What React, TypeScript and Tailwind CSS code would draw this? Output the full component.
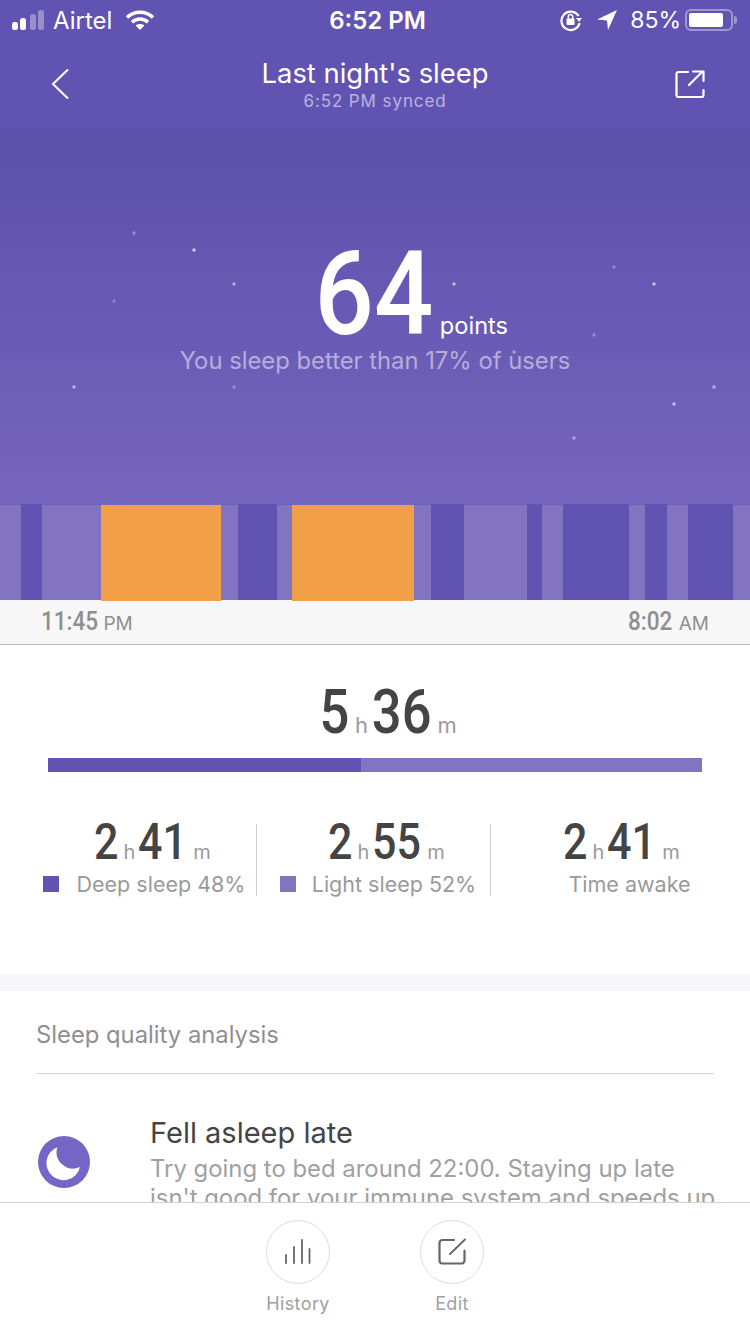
const segs: [number, string][] = [
  [21, "l"], [21, "d"], [59, "l"], [120, "o"], [17, "l"], [39, "d"], [15, "l"], [122, "o"], [17, "l"], [33, "d"],
  [63, "l"], [15, "d"], [21, "l"], [66, "d"], [16, "l"], [22, "d"], [21, "l"], [45, "d"], [17, "l"],
];

const stars: [number, number, number][] = [
  [134, 233, 0.35], [194, 250, 0.7], [234, 284, 0.55], [114, 301, 0.25], [454, 284, 0.6], [614, 267, 0.3],
  [654, 284, 0.65], [594, 335, 0.3], [514, 352, 0.4], [74, 387, 0.55], [234, 387, 0.3], [674, 404, 0.6],
  [714, 387, 0.5], [574, 438, 0.45],
];

function Duration({ h, m, big }: { h: string; m: string; big?: boolean }) {
  const num = big ? "text-[61px] leading-[58px]" : "text-[50px] leading-[50px]";
  const unit = big ? "text-[22px]" : "text-[20px]";
  return (
    <div className="flex items-baseline justify-center text-[#444444]">
      <span className={`${num} font-medium [font-family:Roboto,sans-serif] inline-block scale-x-[0.86]`}>{h}</span>
      <span className={`${unit} text-[#9a9a9a] ml-[3px]`}>h</span>
      <span className={`${num} font-medium [font-family:Roboto,sans-serif] inline-block scale-x-[0.86] -ml-[1px]`}>{m}</span>
      <span className={`${unit} text-[#9a9a9a] ${big ? "ml-[1px]" : "ml-[2px]"}`}>m</span>
    </div>
  );
}

export default function App() {
  return (
    <div className="w-[750px] h-[1334px] overflow-hidden flex flex-col bg-white [font-family:Inter,'Liberation_Sans',sans-serif]">
      <div className="flex-1 min-h-0 overflow-hidden">
        <div className="h-[128px] bg-[#6153b1] text-white">
          <div className="h-[40px] flex items-center justify-between pl-[12px] pr-[13px] text-[24px]">
            <div className="flex items-center">
              <svg width="34" height="22" viewBox="0 0 34 22">
                <rect x="0" y="13" width="6" height="8" rx="2.5" fill="#fff" />
                <rect x="8" y="9" width="6" height="12" rx="2.5" fill="#fff" />
                <rect x="18" y="5" width="6" height="16" rx="2.5" fill="#fff" fillOpacity="0.35" />
                <rect x="26" y="1" width="6" height="20" rx="2.5" fill="#fff" fillOpacity="0.35" />
              </svg>
              <span className="ml-[7px] w-[72px] leading-none mt-[1px]">Airtel</span>
              <svg width="30" height="22" viewBox="0 0 30 22" fill="none" stroke="#fff" strokeWidth="3.4">
                <path d="M2 8.5C9 1.5 21 1.5 28 8.5" />
                <path d="M7 13.2C11.5 9 18.5 9 23 13.2" />
                <path d="M15 21L10.5 16.6C13 14.6 17 14.6 19.5 16.6Z" fill="#fff" stroke="none" />
              </svg>
            </div>
            <span className="absolute left-0 right-0 pl-[5px] text-center font-semibold leading-none pointer-events-none mt-[1px]">6:52 PM</span>
            <div className="flex items-center">
              <svg width="24" height="24" viewBox="0 0 24 24" fill="none" stroke="#fff" strokeWidth="2.2">
                <path d="M19.5 8A9.2 9.2 0 1 0 20.6 15" />
                <path d="M17 10L23 10L20 14Z" fill="#fff" stroke="none" />
                <rect x="7.5" y="10.5" width="8" height="6.5" rx="1" fill="#fff" stroke="none" />
                <path d="M9.3 11V8.7a2.2 2.2 0 0 1 4.4 0V11" strokeWidth="1.5" />
              </svg>
              <svg className="ml-[13px]" width="22" height="22" viewBox="0 0 22 22">
                <path d="M21 1L1 10.5L11 11.5L12 21Z" fill="#fff" />
              </svg>
              <span className="ml-[12px] leading-none text-[23px] mt-[1px]">85%</span>
              <div className="ml-[4px] w-[48px] h-[22px] rounded-[6px] border-2 border-white/40 p-[2px]">
                <div className="h-full w-[34px] bg-white rounded-[2px]" />
              </div>
              <div className="w-[3px] h-[8px] ml-[1px] rounded-r-full bg-white/40" />
            </div>
          </div>
          <div className="h-[88px] flex items-start justify-between pl-[51px] pr-[45px]">
            <div className="w-[24px]">
              <svg className="mt-[28px]" width="18" height="32" viewBox="0 0 18 32" fill="none" stroke="#fff" strokeWidth="2">
                <path d="M17 1.5L2 16L17 30.5" />
              </svg>
            </div>
            <div className="flex flex-col items-center">
              <span className="text-[27.4px] leading-[34px] mt-[16px]">Last night's sleep</span>
              <span className="text-[17px] leading-[20px] text-white/55 tracking-[0.9px] mt-[1px]">6:52 PM synced</span>
            </div>
            <svg className="mt-[29px]" width="30" height="30" viewBox="0 0 30 30" fill="none" stroke="#fff" strokeWidth="2.2" strokeLinecap="round" strokeLinejoin="round">
              <path d="M13 3H3.5A2 2 0 0 0 1.5 5V26A2 2 0 0 0 3.5 28H26.5A2 2 0 0 0 28.5 26V21" />
              <path d="M14 16L27 3" />
              <path d="M18 2.5H28.5V12" />
            </svg>
          </div>
        </div>

        <div className="relative h-[376px] bg-gradient-to-b from-[#5c4fab] to-[#7565be] flex flex-col items-center">
          <svg className="absolute left-0 top-[-128px] pointer-events-none" width="750" height="504">
            {stars.map(([x, y, o]) => (
              <circle key={`${x}-${y}`} cx={x} cy={y} r="1.7" fill="#fff" fillOpacity={o} />
            ))}
          </svg>
          <div className="relative mt-[108px] h-[110px] flex items-baseline ml-[66px]">
            <span className="text-[116px] leading-[116px] font-medium text-white [font-family:Roboto,sans-serif] inline-block scale-x-[0.9]">64</span>
            <span className="text-[23.6px] text-white">points</span>
          </div>
          <span className="relative text-[23.8px] leading-[30px] text-white/50">You sleep better than 17% of users</span>
        </div>

        <div className="flex h-[96px]">
          {segs.map(([w, t], i) => (
            <div
              key={i}
              style={{ width: w }}
              className={
                t === "o"
                  ? "h-[97px] bg-[#f2a048] relative z-10 border-t border-[#7565be]"
                  : t === "d"
                    ? "bg-[#6153b1] border-t border-[#6153b1]"
                    : "bg-[#8274c0] border-t border-[#6f60b6]"
              }
            />
          ))}
        </div>
        <div className="h-[45px] bg-[#f7f7f7] border-b border-[#b9b9b9] flex items-center justify-between pl-[41px] pr-[41px] text-[#8f8f8f]">
          <div className="flex items-baseline">
            <span className="text-[25px] font-medium [font-family:Roboto,sans-serif] inline-block scale-x-[0.9] origin-left">11:45</span>
            <span className="text-[19px] -ml-[1px]">PM</span>
          </div>
          <div className="flex items-baseline">
            <span className="text-[25px] font-medium [font-family:Roboto,sans-serif] inline-block scale-x-[0.9] origin-right">8:02</span>
            <span className="text-[19px] ml-[7px]">AM</span>
          </div>
        </div>

        <div className="h-[329px] flex flex-col">
          <div className="mt-[38px] ml-[24px]"><Duration h="5" m="36" big /></div>
          <div className="mx-[48px] mt-[16px] h-[14px] flex">
            <div className="w-[313px] bg-[#6153b1]" />
            <div className="flex-1 bg-[#8274c0]" />
          </div>
          <div className="mt-[52px] flex pl-[23px]">
            <div className="w-[234px] h-[72px] border-r border-[#cfcfcf] flex flex-col items-center">
              <div className="-mt-[7px] ml-[24px]"><Duration h="2" m="41" /></div>
              <div className="flex items-center mt-[3px] text-[21.5px] leading-[28px] text-[#9a9a9a] ml-[9px]">
                <span className="w-[16px] h-[16px] bg-[#6153b1] mr-[18px]" />
                Deep sleep 48%
              </div>
            </div>
            <div className="w-[234px] h-[72px] border-r border-[#cfcfcf] flex flex-col items-center">
              <div className="-mt-[7px] ml-[24px]"><Duration h="2" m="55" /></div>
              <div className="flex items-center mt-[3px] text-[21.5px] leading-[28px] text-[#9a9a9a] ml-[9px]">
                <span className="w-[16px] h-[16px] bg-[#8274c0] mr-[16px]" />
                Light sleep 52%
              </div>
            </div>
            <div className="flex-1 h-[72px] flex flex-col items-center">
              <div className="-mt-[7px]"><Duration h="2" m="41" /></div>
              <div className="mt-[3px] text-[21.5px] leading-[28px] text-[#9a9a9a] ml-[18px]">Time awake</div>
            </div>
          </div>
        </div>

        <div className="h-[17px] bg-[#f7f7f9]" />

        <div className="mx-[36px] h-[83px] border-b border-[#d4d4d4] pt-[29px] text-[23.8px] leading-[30px] text-[#8f8f8f]">
          Sleep quality analysis
        </div>

        <div className="flex pl-[38px] pr-[28px] pt-[41px]">
          <svg className="mt-[21px] shrink-0" width="52" height="52" viewBox="0 0 52 52">
            <circle cx="26" cy="26" r="26" fill="#7565c4" />
            <path d="M19.3 11.3A17 17 0 1 0 42 31A16.5 16.5 0 0 1 19.3 11.3Z" fill="#fff" />
          </svg>
          <div className="ml-[60px]">
            <div className="text-[29px] leading-[34px] text-[#444444] mt-[1px]">Fell asleep late</div>
            <div className="text-[23.9px] leading-[29px] text-[#a0a0a0] mt-[4px]">
              Try going to bed around 22:00. Staying up late isn't good for your immune system and speeds up aging.
            </div>
          </div>
        </div>
      </div>

      <div className="relative h-[132px] shrink-0 bg-white border-t border-[#d2d2d2] flex justify-center gap-[90px] pt-[17px]">
        <div className="flex flex-col items-center w-[64px]">
          <div className="w-[64px] h-[64px] rounded-full border border-[#dcdcdc] flex items-center justify-center">
            <svg width="28" height="26" viewBox="0 0 28 26" stroke="#666" strokeWidth="1.8" strokeLinecap="round">
              <path d="M2 16V24M10 8V24M18 1V24M25.5 10V24" />
            </svg>
          </div>
          <span className="text-[18px] leading-[24px] text-[#a0a0a0] mt-[8px] tracking-[0.4px] whitespace-nowrap">History</span>
        </div>
        <div className="flex flex-col items-center w-[64px]">
          <div className="w-[64px] h-[64px] rounded-full border border-[#dcdcdc] flex items-center justify-center">
            <svg width="28" height="28" viewBox="0 0 28 28" fill="none" stroke="#666" strokeWidth="2.2" strokeLinecap="round" strokeLinejoin="round">
              <path d="M16 2H4.5A3 3 0 0 0 1.5 5V22.5A3 3 0 0 0 4.5 25.5H23.5A3 3 0 0 0 26.5 22.5V12.5" />
              <path d="M12 16L27 1.5" strokeWidth="1.8" />
            </svg>
          </div>
          <span className="text-[18px] leading-[24px] text-[#a0a0a0] mt-[8px] tracking-[0.4px]">Edit</span>
        </div>
      </div>
    </div>
  );
}
